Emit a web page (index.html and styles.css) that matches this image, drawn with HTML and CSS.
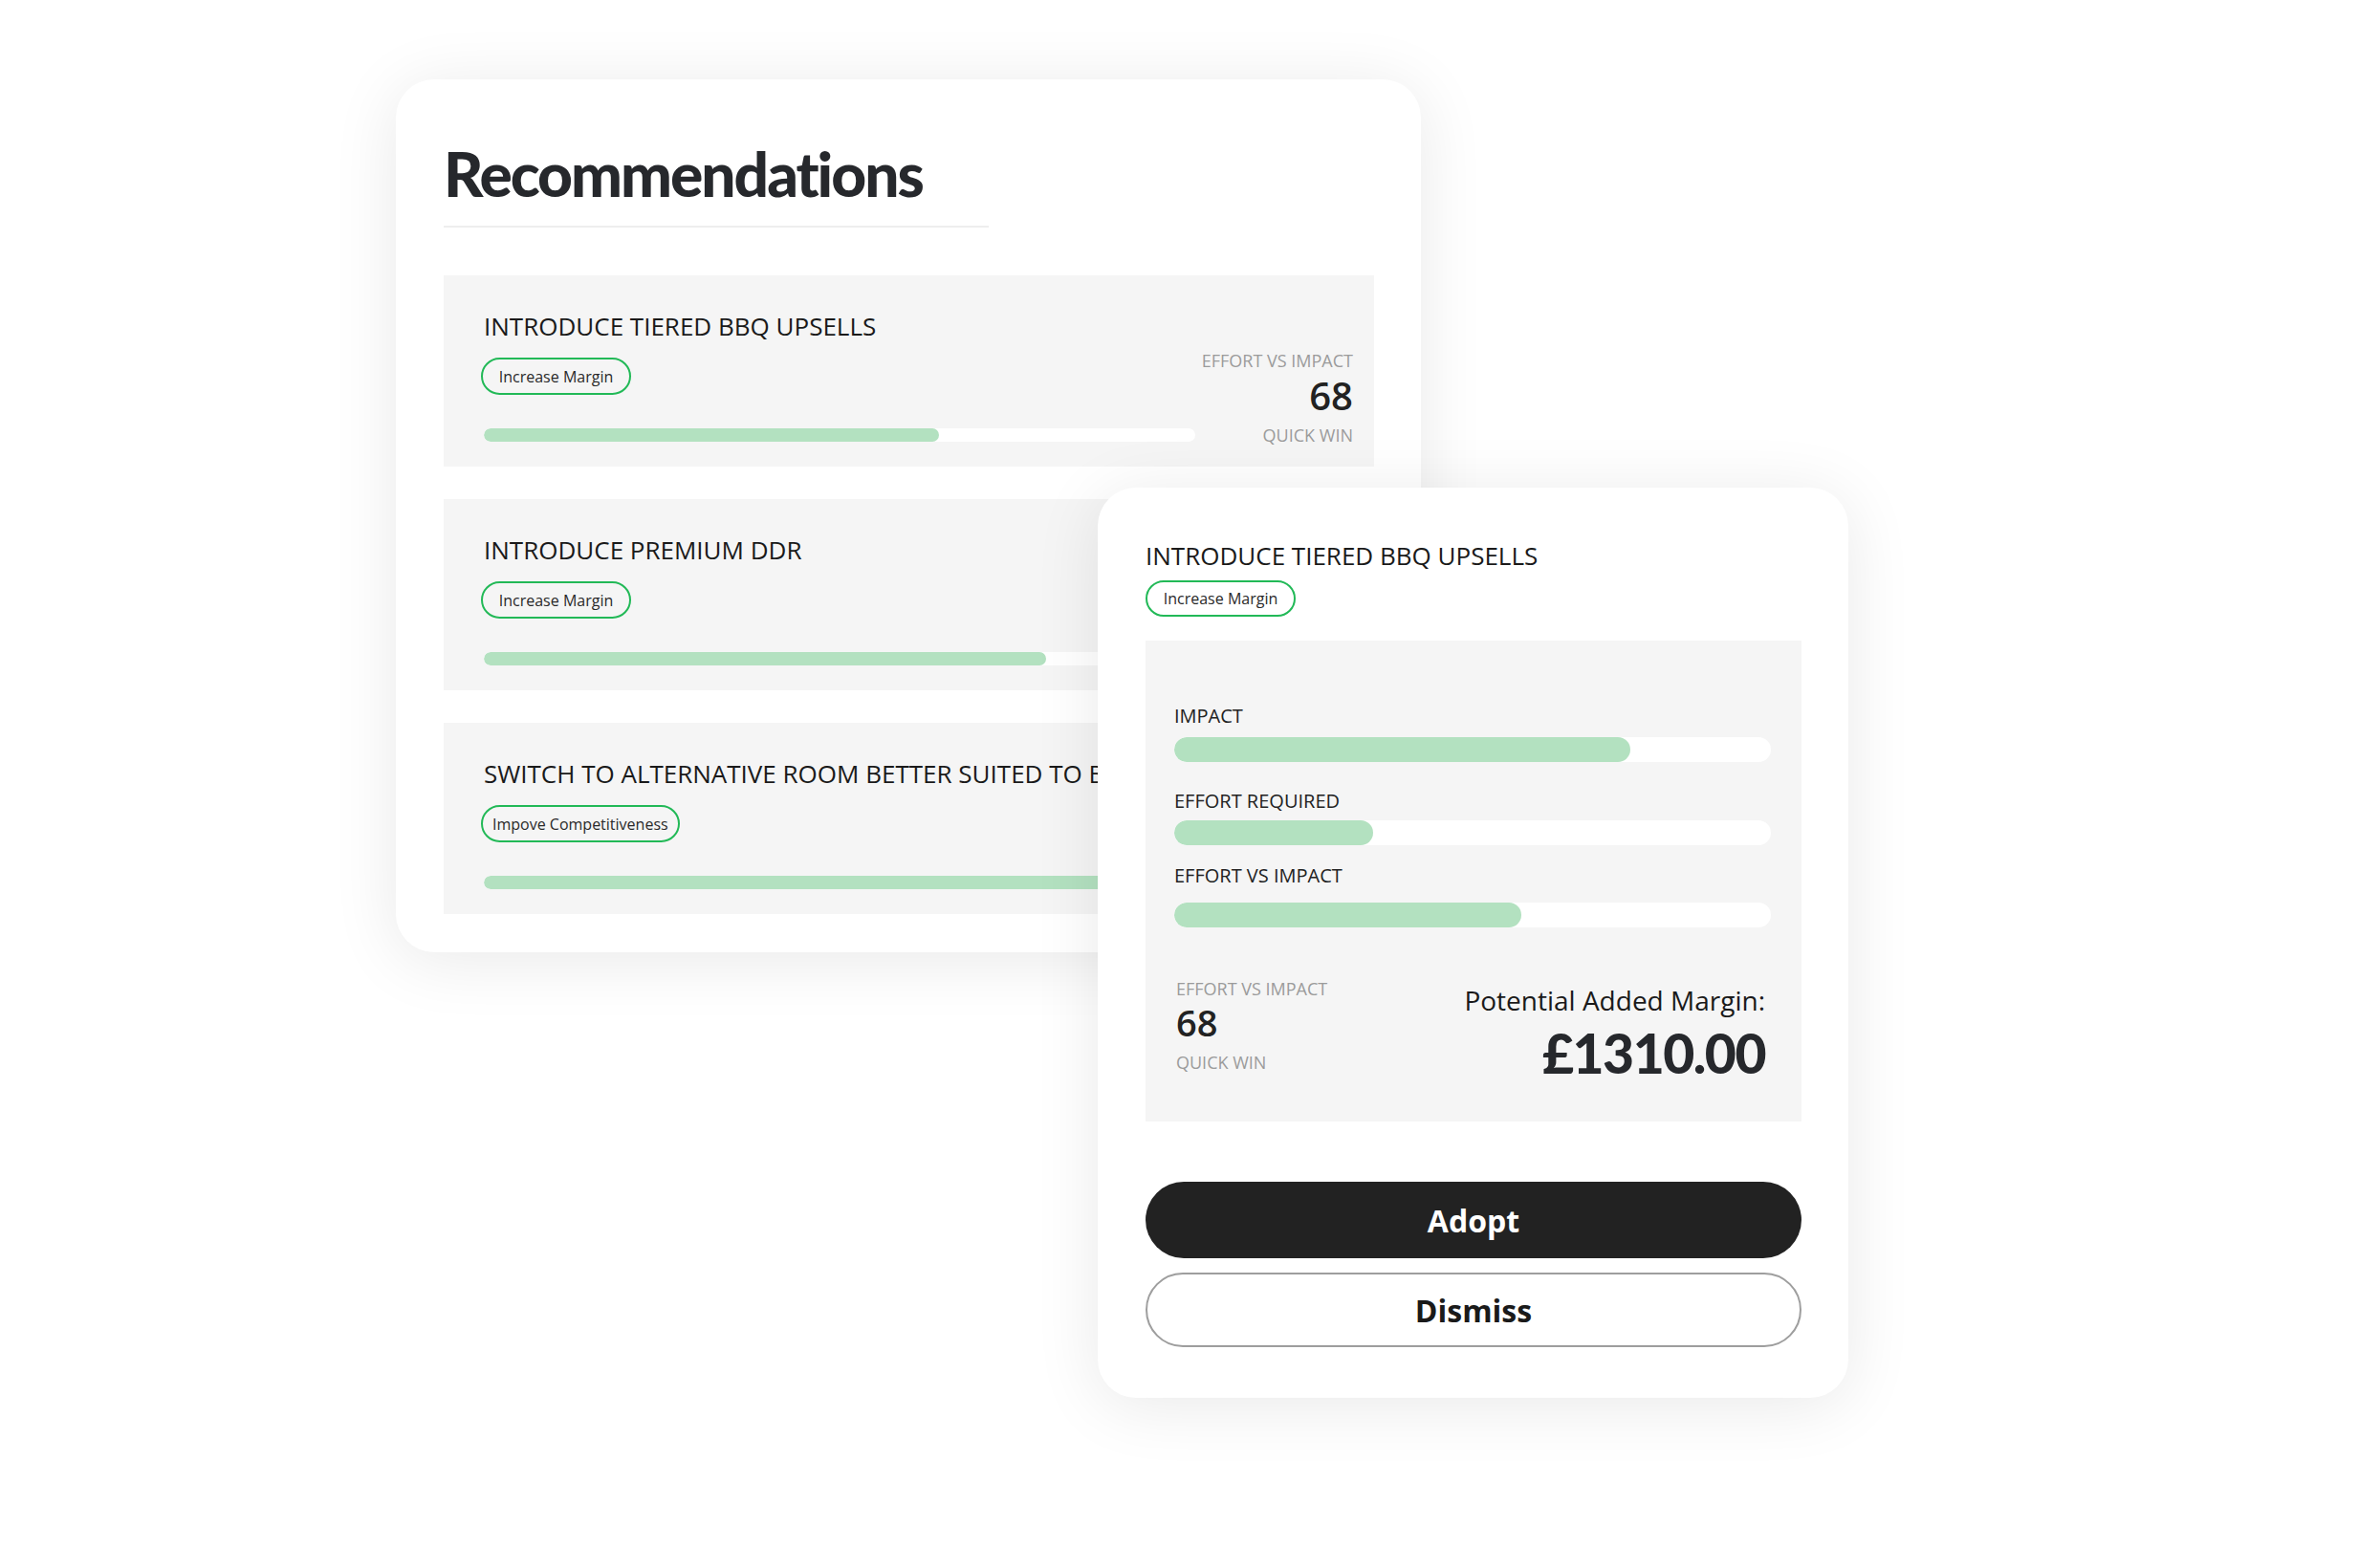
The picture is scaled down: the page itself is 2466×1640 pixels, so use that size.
FILE: index.html
```html
<!DOCTYPE html>
<html lang="en">

<head>
    <meta charset="UTF-8">
    <meta name="viewport" content="width=device-width, initial-scale=1.0">
    <title>Recommendations</title>
    <link rel="stylesheet" href="styles.css">
</head>

<body>
    <div class="stage">

        <!-- List of recommendations -->
        <section class="panel panel-list">
            <h1 class="panel-title">Recommendations</h1>

            <div class="rec-list">
                <div class="rec">
                    <div class="rec-main">
                        <h2 class="rec-name">INTRODUCE TIERED BBQ UPSELLS</h2>
                        <span class="tag">Increase Margin</span>
                        <div class="bar"><div class="bar-fill" style="width: 64%"></div></div>
                    </div>
                    <div class="rec-score">
                        <div class="score-label">EFFORT VS IMPACT</div>
                        <div class="score-value">68</div>
                        <div class="score-label score-label-bottom">QUICK WIN</div>
                    </div>
                </div>

                <div class="rec">
                    <div class="rec-main">
                        <h2 class="rec-name">INTRODUCE PREMIUM DDR</h2>
                        <span class="tag">Increase Margin</span>
                        <div class="bar"><div class="bar-fill" style="width: 79%"></div></div>
                    </div>
                    <div class="rec-score">
                        <div class="score-label">EFFORT VS IMPACT</div>
                        <div class="score-value">74</div>
                        <div class="score-label score-label-bottom">QUICK WIN</div>
                    </div>
                </div>

                <div class="rec">
                    <div class="rec-main">
                        <h2 class="rec-name">SWITCH TO ALTERNATIVE ROOM BETTER SUITED TO BOOKING SIZE</h2>
                        <span class="tag">Impove Competitiveness</span>
                        <div class="bar"><div class="bar-fill" style="width: 92%"></div></div>
                    </div>
                    <div class="rec-score">
                        <div class="score-label">EFFORT VS IMPACT</div>
                        <div class="score-value">81</div>
                        <div class="score-label score-label-bottom">QUICK WIN</div>
                    </div>
                </div>
            </div>
        </section>

        <!-- Detail of the selected recommendation -->
        <section class="panel panel-detail">
            <h2 class="rec-name">INTRODUCE TIERED BBQ UPSELLS</h2>
            <span class="tag tag-small">Increase Margin</span>

            <div class="stats">
                <div class="stat">
                    <div class="stat-label">IMPACT</div>
                    <div class="stat-bar"><div class="bar-fill" style="width: 76.5%"></div></div>
                </div>
                <div class="stat">
                    <div class="stat-label">EFFORT REQUIRED</div>
                    <div class="stat-bar"><div class="bar-fill" style="width: 33.3%"></div></div>
                </div>
                <div class="stat">
                    <div class="stat-label">EFFORT VS IMPACT</div>
                    <div class="stat-bar"><div class="bar-fill" style="width: 58.2%"></div></div>
                </div>

                <div class="summary">
                    <div class="summary-score">
                        <div class="score-label">EFFORT VS IMPACT</div>
                        <div class="summary-value">68</div>
                        <div class="score-label summary-bottom">QUICK WIN</div>
                    </div>
                    <div class="summary-margin">
                        <div class="margin-label">Potential Added Margin:</div>
                        <div class="margin-value">£1310.00</div>
                    </div>
                </div>
            </div>

            <button class="btn btn-adopt">Adopt</button>
            <button class="btn btn-dismiss">Dismiss</button>
        </section>

    </div>
</body>

</html>
```

FILE: styles.css
```css
body {
    margin: 0;
    background-color: #fff;
    font-family: "Open Sans", "Liberation Sans", sans-serif;
    color: #1a1a1a;
}

.stage {
    position: relative;
    height: 1640px;
    padding: 83px 0 0 414px;
    box-sizing: border-box;
    overflow: hidden;
}

.panel {
    background: #fff;
    border-radius: 40px;
    box-shadow: 0 8px 70px rgba(0, 0, 0, 0.09);
    box-sizing: border-box;
}

.panel-list {
    width: 1072px;
    padding: 67px 49px 40px 50px;
}

.panel-title {
    width: 570px;
    box-sizing: border-box;
    margin: 0;
    padding-bottom: 22px;
    border-bottom: 2px solid #eeeeee;
    font-family: Lato, "Liberation Sans", sans-serif;
    font-weight: 900;
    font-size: 64px;
    line-height: 1;
    letter-spacing: -2px;
    color: #26282c;
}

.rec-list {
    margin-top: 50px;
}

.rec {
    display: flex;
    height: 200px;
    background: #f5f5f5;
    margin-bottom: 34px;
}

.rec:last-child {
    margin-bottom: 0;
}

.rec-main {
    display: flex;
    flex-direction: column;
    align-items: flex-start;
    padding: 38px 0 0 42px;
    width: 744px;
    flex: none;
}

.rec-name {
    margin: 0;
    font-weight: 400;
    font-size: 26px;
    line-height: 31px;
    white-space: nowrap;
    color: #1a1a1a;
}

.tag {
    display: inline-flex;
    align-items: center;
    justify-content: center;
    box-sizing: border-box;
    min-width: 157px;
    height: 39px;
    margin: 17px 0 0 -3px;
    padding: 0 10px;
    border: 2px solid #22b957;
    border-radius: 20px;
    font-size: 16px;
    color: #2a2a2a;
}

.bar {
    width: 744px;
    height: 14px;
    margin-top: 35px;
    background: #fff;
    border-radius: 7px;
    overflow: hidden;
}

.bar-fill {
    height: 100%;
    background: #b3e1c0;
    border-radius: inherit;
}

.rec-score {
    flex: 1;
    padding: 77px 22px 0 0;
    text-align: right;
}

.score-label {
    font-size: 18px;
    line-height: 24px;
    color: #9b9b9b;
}

.score-value {
    margin-top: 5px;
    font-weight: 600;
    font-size: 40px;
    line-height: 40px;
    color: #222;
}

.score-label-bottom {
    margin-top: 9px;
}

/* detail card on top */
.panel-detail {
    position: absolute;
    left: 1148px;
    top: 510px;
    width: 785px;
    padding: 56px 49px 53px 50px;
}

.tag-small {
    height: 38px;
    margin: 10px 0 0;
}

.stats {
    margin-top: 25px;
    background: #f5f5f5;
    padding: 66px 32px 43px 30px;
}

.stat-label {
    font-size: 20px;
    line-height: 26px;
    color: #222;
}

.stat-bar {
    height: 26px;
    margin-top: 9px;
    background: #fff;
    border-radius: 13px;
    overflow: hidden;
}

.stat + .stat {
    margin-top: 28px;
}

.stat:nth-child(2) .stat-bar {
    margin-top: 7px;
}

.stat:nth-child(3) {
    margin-top: 19px;
}

.stat:nth-child(3) .stat-bar {
    margin-top: 15px;
}

.summary {
    display: flex;
    justify-content: space-between;
    align-items: flex-start;
    margin-top: 52px;
}

.summary-score {
    padding-left: 2px;
}

.summary-value {
    margin-top: 3px;
    font-weight: 600;
    font-size: 38px;
    line-height: 40px;
    color: #222;
}

.summary-bottom {
    margin-top: 10px;
}

.summary-margin {
    padding: 7px 6px 0 0;
    text-align: right;
}

.margin-label {
    font-size: 28px;
    line-height: 34px;
    color: #1a1a1a;
}

.margin-value {
    margin-top: 10px;
    font-family: Lato, "Liberation Sans", sans-serif;
    font-weight: 900;
    font-size: 57px;
    line-height: 1;
    letter-spacing: -1.5px;
    color: #26282c;
}

.btn {
    display: block;
    width: 100%;
    box-sizing: border-box;
    border-radius: 40px;
    font-family: "Open Sans", "Liberation Sans", sans-serif;
    font-weight: 700;
    font-size: 32px;
    cursor: pointer;
}

.btn-adopt {
    height: 80px;
    margin-top: 63px;
    border: none;
    background: #222;
    color: #fff;
}

.btn-dismiss {
    height: 78px;
    margin-top: 15px;
    border: 2px solid #9e9e9e;
    background: #fff;
    color: #1a1a1a;
}
```
